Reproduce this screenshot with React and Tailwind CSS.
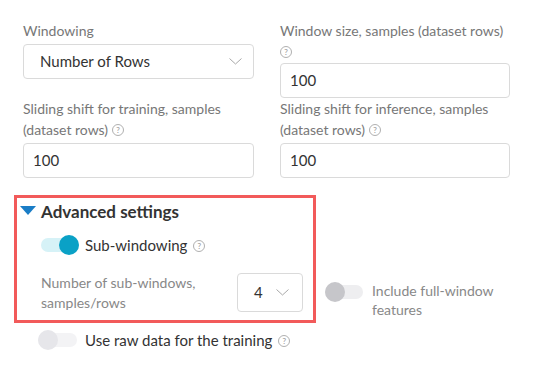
import React from "react";

const Help = ({ className = "" }) => (
  <span
    className={`inline-flex items-center justify-center w-[12px] h-[12px] rounded-full border border-[#b0b0b0] text-[#a0a0a0] text-[8px] leading-none font-semibold align-middle ${className}`}
  >
    ?
  </span>
);

const Chevron = ({ className = "" }) => (
  <svg width="13" height="7" viewBox="0 0 13 7" className={className}>
    <path d="M0.5 0.5 L6.5 6 L12.5 0.5" fill="none" stroke="#a8a8a8" strokeWidth="1" />
  </svg>
);

const Toggle = ({ on }) => (
  <div className="relative w-[38px] h-[20px] shrink-0">
    <div
      className={`absolute left-0 right-0 top-[3px] h-[14px] rounded-full ${
        on ? "bg-[#d6f2f7]" : "bg-[#eeeef0]"
      }`}
    />
    <div
      className={`absolute top-0 w-[20px] h-[20px] rounded-full ${
        on ? "right-0 bg-[#0aa1c6]" : "left-0 bg-[#c6c6ca]"
      }`}
    />
  </div>
);

const ToggleOffLight = () => (
  <div className="relative w-[39px] h-[20px] shrink-0">
    <div className="absolute left-0 right-0 top-[3px] h-[14px] rounded-full bg-[#f3f3f5]" />
    <div className="absolute top-0 left-0 w-[20px] h-[20px] rounded-full bg-[#e6e6ea]" />
  </div>
);

const Input = ({ value }) => (
  <div className="h-[35px] border border-[#dadada] rounded-[4px] flex items-center pl-[9px] text-[15px] text-[#333]">
    {value}
  </div>
);

const Label = ({ children, className = "" }) => (
  <div className={`text-[14px] leading-[21px] text-[#777] ${className}`}>{children}</div>
);

export default function App() {
  return (
    <div
      className="w-[534px] h-[366px] bg-white overflow-hidden"
      style={{ fontFamily: 'Lato, "Open Sans", sans-serif' }}
    >
      <div className="pl-[23px] pt-[20px] grid grid-cols-[231px_230px] gap-x-[26px]">
        <div className="flex flex-col">
          <Label className="mb-[3px]">Windowing</Label>
          <div className="h-[35px] border border-[#dadada] rounded-[4px] flex items-center justify-between pl-[16px] pr-[11px] text-[15px] text-[#333]">
            <span>Number of Rows</span>
            <Chevron />
          </div>
        </div>
        <div className="flex flex-col">
          <Label>Window size, samples (dataset rows)</Label>
          <div className="h-[21px] flex items-center mb-[1px]">
            <Help />
          </div>
          <Input value="100" />
        </div>
        <div className="flex flex-col">
          <Label>Sliding shift for training, samples</Label>
          <Label className="mb-[3px] flex items-center gap-[4px]">
            (dataset rows) <Help />
          </Label>
          <Input value="100" />
        </div>
        <div className="flex flex-col">
          <Label>Sliding shift for inference, samples</Label>
          <Label className="mb-[3px] flex items-center gap-[4px]">
            (dataset rows) <Help />
          </Label>
          <Input value="100" />
        </div>
      </div>

      <div className="ml-[14px] mt-[17px] flex items-start">
        <div className="w-[302px] h-[128px] border-[3px] border-[#f25a5a] flex flex-col">
          <div className="h-[27px] flex items-center pl-[3px]">
            <svg width="16" height="9" viewBox="0 0 16 9" className="mr-[5px] mt-[-2px]">
              <polygon points="0,0 16,0 8,9" fill="#1a7dc6" />
            </svg>
            <span className="text-[17px] leading-[26px] font-bold text-[#333]">
              Advanced settings
            </span>
          </div>
          <div className="mt-[10px] pl-[24px] h-[20px] flex items-center">
            <Toggle on />
            <span className="ml-[6px] text-[15px] text-[#333]">Sub-windowing</span>
            <Help className="ml-[6px] mt-[2px]" />
          </div>
          <div className="mt-[18px] pl-[24px] pr-[10px] flex items-start">
            <div className="w-[196px] text-[14px] leading-[20px] text-[#888]">
              Number of sub-windows, samples/rows
            </div>
            <div className="w-[66px] h-[39px] border border-[#dadada] rounded-[4px] flex items-center justify-between pl-[16px] pr-[13px] text-[15px] text-[#333]">
              <span>4</span>
              <Chevron />
            </div>
          </div>
        </div>
        <div className="ml-[9px] mt-[87px] flex items-start">
          <Toggle on={false} />
          <div className="ml-[9px] w-[140px] text-[14px] leading-[19px] text-[#888] mt-[-1px]">
            Include full-window features
          </div>
        </div>
      </div>

      <div className="ml-[38px] mt-[7px] h-[20px] flex items-center">
        <ToggleOffLight />
        <span className="ml-[8px] text-[15px] text-[#333]">Use raw data for the training</span>
        <Help className="ml-[6px] mt-[2px]" />
      </div>
    </div>
  );
}
